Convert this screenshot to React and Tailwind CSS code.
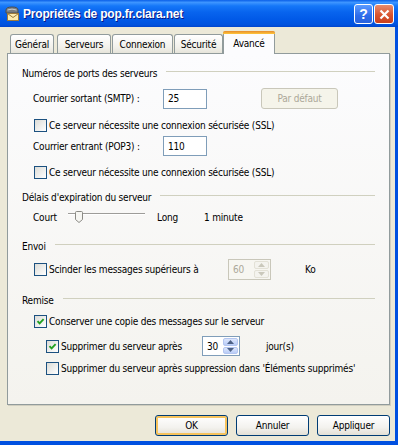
import React from 'react';

const Check = ({ checked }) => (
  <span className="w-[13px] h-[13px] shrink-0 border border-[#1C5180] bg-[linear-gradient(135deg,#DCDCD7,#FFFFFF)] flex items-center justify-center">
    {checked && (
      <svg width="9" height="9" viewBox="0 0 9 9">
        <path d="M1.5 4.2 L3.6 6.4 L7.6 2.2" stroke="#21A121" strokeWidth="1.9" fill="none" />
      </svg>
    )}
  </span>
);

const Group = ({ title, className }) => (
  <div className={`flex items-center h-[14px] ${className}`}>
    <span>{title}</span>
    <span className="flex-1 ml-[9px] mb-[4px] h-px bg-[#D0D0BF]" />
  </div>
);

const Spin = ({ disabled }) => {
  const box = disabled
    ? 'bg-[#F4F3EE] border border-[#E3E1D6]'
    : 'bg-[linear-gradient(180deg,#DCE6FC,#B9CCF7)] border border-[#B4C6F0]';
  const arrow = disabled ? '#CAC8BB' : '#4D6185';
  return (
    <div className="flex flex-col w-[15px] h-full gap-px">
      <div className={`flex-1 rounded-[2px] flex items-center justify-center ${box}`}>
        <svg width="7" height="4" viewBox="0 0 7 4"><path d="M0 4 L3.5 0 L7 4 Z" fill={arrow} /></svg>
      </div>
      <div className={`flex-1 rounded-[2px] flex items-center justify-center ${box}`}>
        <svg width="7" height="4" viewBox="0 0 7 4"><path d="M0 0 L3.5 4 L7 0 Z" fill={arrow} /></svg>
      </div>
    </div>
  );
};

const Button = ({ label, focus }) => (
  <button
    className={`w-[73px] h-[21px] rounded-[3px] border border-[#003C74] bg-[linear-gradient(180deg,#FFFFFF,#F3F2EE_60%,#E3E0D6)] ${
      focus ? 'shadow-[inset_0_0_0_2px_#F6C35D]' : ''
    }`}
  >
    {label}
  </button>
);

const TitleBar = () => (
  <div className="h-[27px] shrink-0 flex items-center pl-[4px] pr-[4px] bg-[linear-gradient(180deg,#0A5FE8_0%,#3D95FF_9%,#1577F8_22%,#0864EE_45%,#0058E6_75%,#0052DE_92%,#0044CC_100%)]">
    <svg width="16" height="16" viewBox="0 0 16 16" className="shrink-0">
      <path d="M2 7 L2 4 Q2 1 8 1 Q14 1 14 4 L14 7 Z" fill="#7A7E80" stroke="#4A4E52" strokeWidth="1" />
      <path d="M3.5 4 Q8 2.2 12.5 4" stroke="#C9CDD0" strokeWidth="1" fill="none" />
      <rect x="3.5" y="7.5" width="11" height="7" fill="#FBEBB0" stroke="#9C7A3C" />
      <path d="M3.5 7.5 L9 11.5 L14.5 7.5" stroke="#9C7A3C" fill="none" />
    </svg>
    <span className="ml-[3px] text-white font-bold text-[12px] tracking-[-0.2px] font-['Liberation_Sans',Arial,sans-serif] [text-shadow:1px_1px_#0A1883]">
      Propriétés de pop.fr.clara.net
    </span>
    <div className="ml-auto flex gap-[1px] mt-[1px]">
      <div className="w-[19px] h-[20px] rounded-[3px] border border-white bg-[linear-gradient(180deg,#5C9BFF,#2E6CEA_60%,#2A63DC)] flex items-center justify-center text-white font-bold text-[14px] font-['Liberation_Sans',Arial,sans-serif]">
        ?
      </div>
      <div className="w-[20px] h-[20px] rounded-[3px] border border-white bg-[linear-gradient(180deg,#E88C6E,#D9542F_55%,#C9401D)] flex items-center justify-center">
        <svg width="11" height="11" viewBox="0 0 11 11">
          <path d="M1.5 1.5 L9.5 9.5 M9.5 1.5 L1.5 9.5" stroke="#FFFFFF" strokeWidth="2.2" />
        </svg>
      </div>
    </div>
  </div>
);

const tabs = [
  { label: 'Général', cls: 'w-[44px]' },
  { label: 'Serveurs', cls: 'w-[54px] ml-[3px]' },
  { label: 'Connexion', cls: 'w-[61px] ml-[1px]' },
  { label: 'Sécurité', cls: 'w-[49px] ml-[1px]' },
];

const Tabs = () => (
  <div className="h-[26px] shrink-0 flex items-end pl-[10px]">
    {tabs.map((t) => (
      <div
        key={t.label}
        className={`h-[19px] border border-b-0 border-[#919B9C] rounded-t-[3px] bg-[linear-gradient(180deg,#FFFFFF,#F1F0EA_70%,#E6E4DA)] flex items-center justify-center ${t.cls}`}
      >
        {t.label}
      </div>
    ))}
    <div className="relative z-10 -mb-px w-[52px] h-[23px] rounded-t-[3px] border-x border-[#919B9C] bg-[#FCFCFE] flex flex-col">
      <div className="h-[3px] rounded-t-[2px] -mx-px bg-[linear-gradient(180deg,#E68B2C,#FFC73C)]" />
      <div className="flex-1 flex items-center justify-center pb-[2px]">Avancé</div>
    </div>
  </div>
);

const Panel = () => (
  <div className="ml-[7px] w-[383px] h-[352px] shrink-0 border border-[#919B9C] shadow-[1px_1px_0_#D0CEBF] bg-[linear-gradient(180deg,#FCFCFE,#F4F3EE)] flex flex-col px-[14px]">
    <Group title="Numéros de ports des serveurs" className="mt-[12px]" />

    <div className="mt-[8px] h-[21px] flex items-center pl-[11px]">
      <span className="w-[130px]">Courrier sortant (SMTP) :</span>
      <div className="w-[44px] h-[20px] border border-[#7F9DB9] bg-white flex items-center pl-[4px]">25</div>
      <div className="ml-[54px] w-[77px] h-[21px] rounded-[3px] border border-[#C9C7BA] bg-[#F5F4EA] text-[#ACA899] flex items-center justify-center">
        Par défaut
      </div>
    </div>

    <div className="mt-[9px] h-[14px] flex items-center gap-[2px] pl-[12px]">
      <Check />
      <span>Ce serveur nécessite une connexion sécurisée (SSL)</span>
    </div>

    <div className="mt-[4px] h-[20px] flex items-center pl-[11px]">
      <span className="w-[130px]">Courrier entrant (POP3) :</span>
      <div className="w-[44px] h-[20px] border border-[#7F9DB9] bg-white flex items-center pl-[4px]">110</div>
    </div>

    <div className="mt-[9px] h-[14px] flex items-center gap-[2px] pl-[12px]">
      <Check />
      <span>Ce serveur nécessite une connexion sécurisée (SSL)</span>
    </div>

    <Group title="Délais d'expiration du serveur" className="mt-[11px]" />

    <div className="mt-[6px] h-[14px] flex items-center pl-[11px]">
      <span className="w-[35px]">Court</span>
      <div className="relative w-[77px] h-[14px]">
        <div className="absolute left-0 right-0 top-[3px] h-[2px] border-t border-[#9D9C99] border-b border-b-white" />
        <svg className="absolute left-[7px] top-[1px]" width="8" height="12" viewBox="0 0 8 12">
          <path d="M0.5 1.5 Q0.5 0.5 1.5 0.5 L6.5 0.5 Q7.5 0.5 7.5 1.5 L7.5 8.5 L4 11.5 L0.5 8.5 Z" fill="#F6F6F2" stroke="#8B8A85" />
        </svg>
      </div>
      <span className="ml-[12px] w-[47px]">Long</span>
      <span>1 minute</span>
    </div>

    <Group title="Envoi" className="mt-[15px]" />

    <div className="mt-[6px] h-[21px] flex items-center pl-[12px]">
      <div className="w-[194px] flex items-center gap-[2px]">
        <Check />
        <span>Scinder les messages supérieurs à</span>
      </div>
      <div className="w-[43px] h-[21px] border border-[#C9C7BA] bg-[#F7F6F1] flex items-center justify-between pl-[4px] pr-px py-px text-[#ACA899]">
        <span>60</span>
        <Spin disabled />
      </div>
      <span className="ml-[34px]">Ko</span>
    </div>

    <Group title="Remise" className="mt-[13px]" />

    <div className="mt-[7px] h-[14px] flex items-center gap-[2px] pl-[12px]">
      <Check checked />
      <span>Conserver une copie des messages sur le serveur</span>
    </div>

    <div className="mt-[8px] h-[20px] flex items-center pl-[24px]">
      <div className="w-[156px] flex items-center gap-[2px]">
        <Check checked />
        <span>Supprimer du serveur après</span>
      </div>
      <div className="w-[38px] h-[20px] border border-[#7F9DB9] bg-white flex items-center justify-between pl-[4px] pr-px py-px">
        <span>30</span>
        <Spin />
      </div>
      <span className="ml-[26px]">jour(s)</span>
    </div>

    <div className="mt-[5px] h-[14px] flex items-center gap-[2px] pl-[24px]">
      <Check />
      <span>Supprimer du serveur après suppression dans 'Éléments supprimés'</span>
    </div>
  </div>
);

export default function App() {
  return (
    <div className="w-[398px] h-[445px] flex flex-col bg-[#0050E0] font-['DejaVu_Sans_Condensed','Liberation_Sans',sans-serif] text-[10px] tracking-[-0.2px] text-black overflow-hidden">
      <TitleBar />
      <div className="flex-1 flex flex-col bg-[#ECE9D8] mr-[3px] mb-[4px]">
        <Tabs />
        <Panel />
        <div className="mt-[10px] flex justify-end gap-[8px] pr-[5px]">
          <Button label="OK" focus />
          <Button label="Annuler" />
          <Button label="Appliquer" />
        </div>
      </div>
    </div>
  );
}
